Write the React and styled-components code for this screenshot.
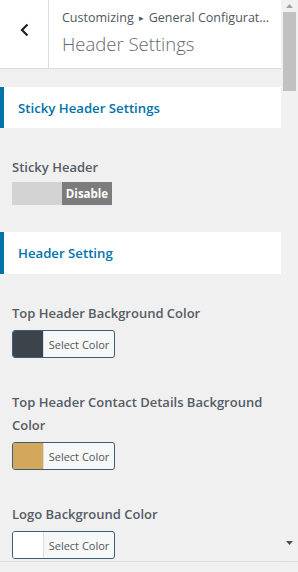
import React from "react";
import styled, { createGlobalStyle } from "styled-components";

const GlobalStyle = createGlobalStyle`
  html, body {
    margin: 0;
    padding: 0;
    background: #f0f0f1;
    font-family: "Open Sans", "Noto Sans", sans-serif;
    overflow: hidden;
  }
`;

const Frame = styled.div`
  width: 298px;
  height: 572px;
  display: flex;
  flex-direction: column;
  background: #f0f0f1;
`;

const Body = styled.div`
  height: 561px;
  display: flex;
  border-bottom: 1px solid #dcdcde;
  overflow: hidden;
`;

const Main = styled.div`
  flex: 1;
  min-width: 0;
`;

const Header = styled.div`
  height: 68px;
  display: flex;
  background: #fff;
  border-bottom: 1px solid #dcdcde;
`;

const BackButton = styled.div`
  width: 48px;
  display: flex;
  align-items: center;
  justify-content: center;
  border-right: 1px solid #dcdcde;
  color: #1d2327;
  padding-bottom: 8px;
`;

const Titles = styled.div`
  flex: 1;
  min-width: 0;
  padding: 8px 0 0 13px;
`;

const Crumb = styled.div`
  font-size: 12.5px;
  line-height: 20px;
  color: #50575e;
  white-space: nowrap;
  overflow: hidden;
`;

const Arrow = styled.span`
  font-size: 9px;
  margin: 0 5px;
  vertical-align: 1px;
`;

const Title = styled.div`
  margin-top: 2px;
  font-size: 18.5px;
  font-weight: 300;
  line-height: 28px;
  color: #646970;
`;

const Section = styled.div`
  margin-top: ${(p) => p.top}px;
  height: ${(p) => p.h}px;
  display: flex;
  align-items: center;
  padding-left: 14px;
  background: #fff;
  border-left: 4px solid #0073aa;
  font-size: 13.2px;
  font-weight: 600;
  color: #0073aa;
`;

const Controls = styled.div`
  padding: 28px 12px 0 12px;
  display: flex;
  flex-direction: column;
  gap: 33px;
`;

const Control = styled.div`
  display: flex;
  flex-direction: column;
  align-items: flex-start;
`;

const Label = styled.div`
  font-size: 13px;
  font-weight: 600;
  line-height: 23px;
  color: #555c63;
  margin-bottom: ${(p) => (p.tight ? 3 : 5)}px;
`;

const Toggle = styled.div`
  display: flex;
  height: 23px;
  font-size: 11.5px;
  font-weight: 700;
  color: #fff;
`;

const ToggleHalf = styled.div`
  width: 50px;
  display: flex;
  align-items: center;
  justify-content: center;
  background: ${(p) => (p.on ? "#7c7c7c" : "#d3d3d3")};
`;

const ColorButton = styled.div`
  display: flex;
  height: 26px;
  width: 101px;
  border: 1px solid #3e5c76;
  border-radius: 3px;
  overflow: hidden;
  background: #f6f7f7;
`;

const Swatch = styled.div`
  width: 30px;
  background: ${(p) => p.color};
  border-right: 1px solid #dcdcde;
`;

const ColorText = styled.div`
  flex: 1;
  display: flex;
  align-items: center;
  justify-content: center;
  font-size: 11px;
  color: #50575e;
`;

const Scrollbar = styled.div`
  width: 17px;
  background: #f1f1f1;
  display: flex;
  flex-direction: column;
  align-items: center;
`;

const ScrollArrow = styled.div`
  height: 12px;
  width: 17px;
  display: flex;
  align-items: center;
  justify-content: center;
`;

const Thumb = styled.div`
  width: 13px;
  height: 79px;
  background: #c1c1c1;
`;

const Track = styled.div`
  flex: 1;
`;

const Footer = styled.div`
  flex: 1;
  background: #f0f0f1;
`;

const colorItems = [
  { label: "Top Header Background Color", color: "#3c434a" },
  { label: "Top Header Contact Details Background Color", color: "#d4a85c" },
  { label: "Logo Background Color", color: "#ffffff" },
];

const App = () => (
  <Frame>
    <GlobalStyle />
    <Body>
      <Main>
        <Header>
          <BackButton>
            <svg width="9" height="14" viewBox="0 0 9 14">
              <path d="M7.5 1.5 L2 7 L7.5 12.5" fill="none" stroke="#1d2327" strokeWidth="2.2" />
            </svg>
          </BackButton>
          <Titles>
            <Crumb>
              Customizing<Arrow>▸</Arrow>General Configurat...
            </Crumb>
            <Title>Header Settings</Title>
          </Titles>
        </Header>

        <Section top={18} h={41}>Sticky Header Settings</Section>
        <Controls>
          <Control>
            <Label tight>Sticky Header</Label>
            <Toggle>
              <ToggleHalf />
              <ToggleHalf on>Disable</ToggleHalf>
            </Toggle>
          </Control>
        </Controls>

        <Section top={27} h={42}>Header Setting</Section>
        <Controls>
          {colorItems.map((item) => (
            <Control key={item.label}>
              <Label>{item.label}</Label>
              <ColorButton>
                <Swatch color={item.color} />
                <ColorText>Select Color</ColorText>
              </ColorButton>
            </Control>
          ))}
        </Controls>
      </Main>
      <Scrollbar>
        <ScrollArrow>
          <svg width="7" height="4" viewBox="0 0 7 4">
            <path d="M0 4 L3.5 0 L7 4 Z" fill="#a3a3a3" />
          </svg>
        </ScrollArrow>
        <Thumb />
        <Track />
        <ScrollArrow>
          <svg width="7" height="4" viewBox="0 0 7 4">
            <path d="M0 0 L7 0 L3.5 4 Z" fill="#505050" />
          </svg>
        </ScrollArrow>
        <ScrollArrow />
      </Scrollbar>
    </Body>
    <Footer />
  </Frame>
);

export default App;
